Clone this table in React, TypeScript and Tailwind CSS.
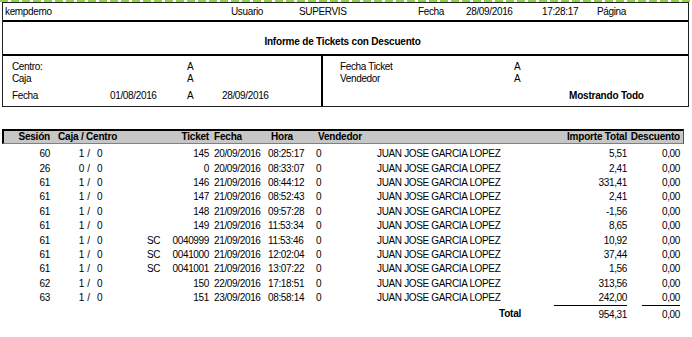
const rows = [
  ["60", "1", "", "145", "20/09/2016", "08:25:17", "5,51"],
  ["26", "0", "", "0", "20/09/2016", "08:33:07", "2,41"],
  ["61", "1", "", "146", "21/09/2016", "08:44:12", "331,41"],
  ["61", "1", "", "147", "21/09/2016", "08:52:43", "2,41"],
  ["61", "1", "", "148", "21/09/2016", "09:57:28", "-1,56"],
  ["61", "1", "", "149", "21/09/2016", "11:53:34", "8,65"],
  ["61", "1", "SC", "0040999", "21/09/2016", "11:53:46", "10,92"],
  ["61", "1", "SC", "0041000", "21/09/2016", "12:02:04", "37,44"],
  ["61", "1", "SC", "0041001", "21/09/2016", "13:07:22", "1,56"],
  ["62", "1", "", "150", "22/09/2016", "17:18:51", "313,56"],
  ["63", "1", "", "151", "23/09/2016", "08:58:14", "242,00"],
]

export default function App() {
  return (
    <div className="w-[692px] h-[337px] bg-white text-black text-[10px] leading-none tracking-[-0.35px] font-['Liberation_Sans',Arial,sans-serif] overflow-hidden">
      <div className="h-[2px] bg-[repeating-linear-gradient(90deg,#8fd14f_0_8px,transparent_8px_11px)]" />

      {/* report header box */}
      <div className="ml-[2px] w-[687px] border border-[#202020]">
        <div className="h-[19px] flex items-center border-b-2 border-black whitespace-nowrap">
          <span className="w-[228px] pl-[2px]">kempdemo</span>
          <span className="w-[68px]">Usuario</span>
          <span className="w-[119px]">SUPERVIS</span>
          <span className="w-[48px]">Fecha</span>
          <span className="w-[76px]">28/09/2016</span>
          <span className="w-[55px]">17:28:17</span>
          <span>Página</span>
        </div>
        <div className="h-[34px] flex items-center justify-center pt-[7px] pr-[6px] border-b-2 border-black font-bold tracking-[-0.2px]">
          Informe de Tickets con Descuento
        </div>
        <div className="h-[50px] flex whitespace-nowrap">
          <div className="w-[320px] border-r-2 border-black pl-[9px] pt-[5px]">
            <div className="h-[12px] flex items-center">
              <span className="w-[175px]">Centro:</span>
              <span>A</span>
            </div>
            <div className="h-[12px] flex items-center">
              <span className="w-[175px]">Caja</span>
              <span>A</span>
            </div>
            <div className="h-[12px] mt-[5px] flex items-center">
              <span className="w-[98px]">Fecha</span>
              <span className="w-[77px]">01/08/2016</span>
              <span className="w-[35px]">A</span>
              <span>28/09/2016</span>
            </div>
          </div>
          <div className="flex-1 pl-[17px] pt-[5px]">
            <div className="h-[12px] flex items-center">
              <span className="w-[174px]">Fecha Ticket</span>
              <span>A</span>
            </div>
            <div className="h-[12px] flex items-center">
              <span className="w-[174px]">Vendedor</span>
              <span>A</span>
            </div>
            <div className="h-[12px] mt-[5px] flex items-center">
              <span className="w-[229px]" />
              <span className="font-bold tracking-[-0.2px]">Mostrando Todo</span>
            </div>
          </div>
        </div>
      </div>

      {/* column header band */}
      <div className="mt-[22px] ml-[2px] w-[682px] h-[15px] flex items-center bg-[#c6c6c6] border-t-2 border-l-2 border-black border-r border-b border-r-[#505050] border-b-[#808080] font-bold tracking-[-0.2px] whitespace-nowrap">
        <span className="w-[46px] text-right">Sesión</span>
        <span className="w-[97px] pl-[8px]">Caja / Centro</span>
        <span className="w-[20px]" />
        <span className="w-[42px] text-right">Ticket</span>
        <span className="w-[59px] pl-[5px]">Fecha</span>
        <span className="w-[48px] pl-[3px]">Hora</span>
        <span className="w-[61px] pl-[2px]">Vendedor</span>
        <span className="w-[190px]" />
        <span className="w-[60px] text-right">Importe Total</span>
        <span className="w-[53px] text-right">Descuento</span>
      </div>

      {/* ticket rows */}
      <div className="mt-[3px]">
        {rows.map((r, i) => (
          <div key={i} className="h-[14.4px] flex items-center whitespace-nowrap">
            <span className="w-[50px] text-right">{r[0]}</span>
            <span className="w-[97px] flex">
              <span className="w-[34px] text-right">{r[1]}</span>
              <span className="w-[9px] text-center">/</span>
              <span className="pl-[4px]">0</span>
            </span>
            <span className="w-[20px]">{r[2]}</span>
            <span className="w-[42px] text-right">{r[3]}</span>
            <span className="w-[59px] pl-[5px]">{r[4]}</span>
            <span className="w-[48px]">{r[5]}</span>
            <span className="w-[61px]">0</span>
            <span className="w-[190px]">JUAN JOSE GARCIA LOPEZ</span>
            <span className="w-[60px] text-right">{r[6]}</span>
            <span className="w-[53px] text-right">0,00</span>
          </div>
        ))}
      </div>

      {/* totals */}
      <div className="flex whitespace-nowrap">
        <span className="w-[499px]" />
        <span className="w-[55px] pt-[4px] font-bold tracking-[-0.2px]">Total</span>
        <span className="w-[73px] border-t border-black pt-[4px] text-right">954,31</span>
        <span className="w-[15px]" />
        <span className="w-[38px] border-t border-black pt-[4px] text-right">0,00</span>
      </div>
    </div>
  )
}
